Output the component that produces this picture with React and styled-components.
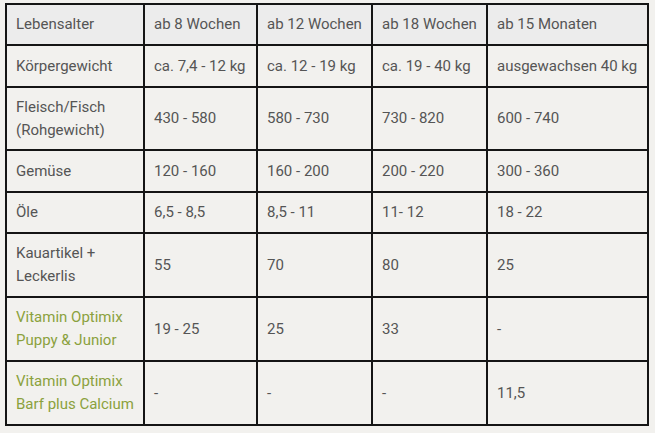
import React from "react";
import styled, { createGlobalStyle } from "styled-components";

const Global = createGlobalStyle`
  html, body { margin: 0; padding: 0; background: #f2f1ee; }
  body { font-family: Roboto, "Liberation Sans", sans-serif; }
`;

const Page = styled.div`
  padding: 3px 0 0 5px;
`;

const Table = styled.table`
  border-collapse: collapse;
  table-layout: fixed;
  width: 642px;
  font-size: 15px;
  color: #555;
`;

const Row = styled.tr`
  height: ${(p) => p.$h}px;
  background: ${(p) => (p.$head ? "#ececec" : "#f2f1ee")};
`;

const Cell = styled.td`
  border: 2px solid #151515;
  padding: 0 9px;
  vertical-align: middle;
  line-height: 23px;
  color: ${(p) => (p.$green ? "#8ba13d" : "#555")};
  white-space: nowrap;
`;

const widths = [138, 113, 115, 115, 161];

const rows = [
  { h: 41, head: true, cells: ["Lebensalter", "ab 8 Wochen", "ab 12 Wochen", "ab 18 Wochen", "ab 15 Monaten"] },
  { h: 42, cells: ["Körpergewicht", "ca. 7,4 - 12 kg", "ca. 12 - 19 kg", "ca. 19 - 40 kg", "ausgewachsen 40 kg"] },
  { h: 63, cells: [["Fleisch/Fisch", "(Rohgewicht)"], "430 - 580", "580 - 730", "730 - 820", "600 - 740"] },
  { h: 42, cells: ["Gemüse", "120 - 160", "160 - 200", "200 - 220", "300 - 360"] },
  { h: 41, cells: ["Öle", "6,5 - 8,5", "8,5 - 11", "11- 12", "18 - 22"] },
  { h: 64, cells: [["Kauartikel +", "Leckerlis"], "55", "70", "80", "25"] },
  { h: 64, green: true, cells: [["Vitamin Optimix", "Puppy & Junior"], "19 - 25", "25", "33", "-"] },
  { h: 64, green: true, cells: [["Vitamin Optimix", "Barf plus Calcium"], "-", "-", "-", "11,5"] },
];

export default function App() {
  return (
    <>
      <Global />
      <Page>
        <Table>
          <colgroup>
            {widths.map((w, i) => (
              <col key={i} style={{ width: w }} />
            ))}
          </colgroup>
          <tbody>
            {rows.map((r, ri) => (
              <Row key={ri} $h={r.h} $head={r.head}>
                {r.cells.map((c, ci) => (
                  <Cell key={ci} $green={r.green && ci === 0}>
                    {Array.isArray(c) ? (
                      <>
                        {c[0]}
                        <br />
                        {c[1]}
                      </>
                    ) : (
                      c
                    )}
                  </Cell>
                ))}
              </Row>
            ))}
          </tbody>
        </Table>
      </Page>
    </>
  );
}
